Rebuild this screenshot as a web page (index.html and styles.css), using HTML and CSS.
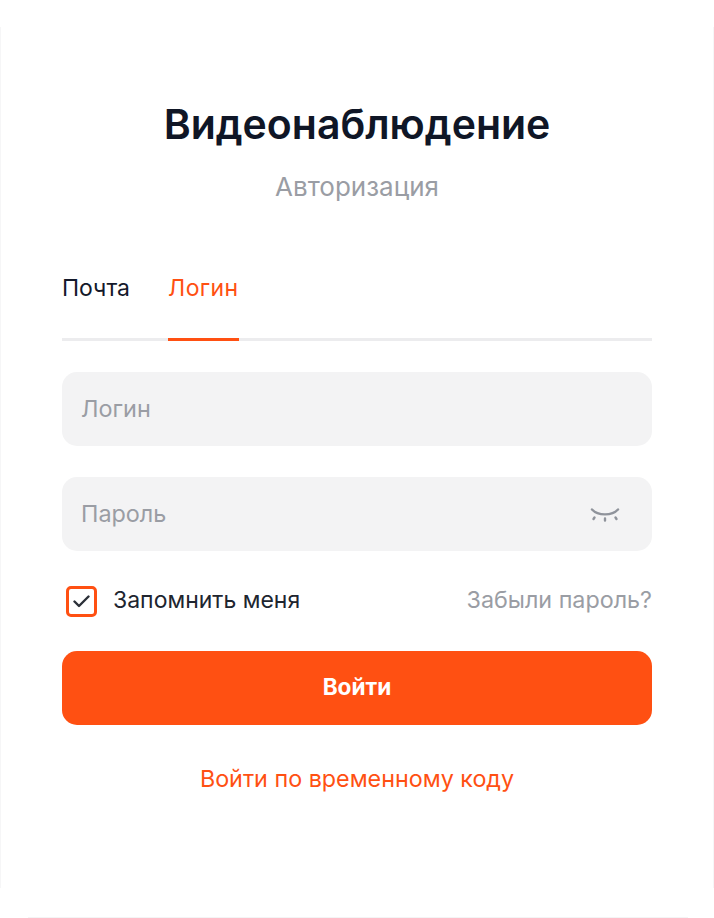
FILE: index.html
```html
<!DOCTYPE html>
<html lang="ru">
<head>
<meta charset="utf-8">
<title>Видеонаблюдение</title>
<link rel="stylesheet" href="styles.css">
</head>
<body>
<main class="card">
  <h1 class="title">Видеонаблюдение</h1>
  <p class="subtitle">Авторизация</p>
  <nav class="tabs">
    <a class="tab">Почта</a>
    <a class="tab tab-active">Логин</a>
  </nav>
  <form class="form">
    <div class="field"><span class="placeholder">Логин</span></div>
    <div class="field">
      <span class="placeholder">Пароль</span>
      <svg class="eye" width="30" height="18" viewBox="0 0 30 18" fill="none" stroke="#8f939b" stroke-linecap="round">
        <path d="M2 3.5C8 10 22 10 28 3.5" stroke-width="2.4"/>
        <path d="M4.5 11.5L3.5 13M15 12.5V14.5M25.5 11.5L26.5 13" stroke-width="2.4"/>
      </svg>
    </div>
    <div class="options">
      <label class="remember">
        <span class="checkbox">
          <svg width="17" height="13" viewBox="0 0 17 13" fill="none" stroke="#2b3038" stroke-width="2.4" stroke-linecap="round" stroke-linejoin="round"><path d="M1.5 6.5L6 11L15.5 1.5"/></svg>
        </span>
        <span class="remember-text">Запомнить меня</span>
      </label>
      <a class="forgot">Забыли пароль?</a>
    </div>
    <button class="submit" type="button">Войти</button>
    <a class="code-link">Войти по временному коду</a>
  </form>
</main>
</body>
</html>
```

FILE: styles.css
```css
* { box-sizing: border-box; }
html, body { margin: 0; height: 100%; background: #fff; }
body { font-family: Inter, "Noto Sans", sans-serif; overflow: hidden; }
.card {
  height: 918px;
  padding: 0 62px;
  background-color: #fff;
  background-image:
    linear-gradient(#f6f6f7, #f6f6f7),
    linear-gradient(#f6f6f7, #f6f6f7),
    linear-gradient(#f4f4f5, #f4f4f5);
  background-repeat: no-repeat;
  background-size: 1px 861px, 1px 861px, 660px 1px;
  background-position: 0 27px, 713px 27px, 28px 917px;
  display: flex;
  flex-direction: column;
}
.title {
  margin: 99px 0 0;
  height: 50px;
  font-size: 41px;
  line-height: 50px;
  font-weight: 600;
  color: #0f1626;
  text-align: center;
  white-space: nowrap;
}
.subtitle {
  margin: 23px 0 0;
  font-size: 26px;
  line-height: 30px;
  color: #9a9da4;
  text-align: center;
}
.tabs {
  margin-top: 68px;
  display: flex;
  gap: 38px;
  height: 71px;
  border-bottom: 3px solid #ececee;
}
.tab {
  height: 71px;
  padding-top: 3px;
  font-size: 23px;
  line-height: 30px;
  color: #14192a;
}
.tab-active { color: #ff5012; border-bottom: 3px solid #ff5012; letter-spacing: 0.4px; }
.form { display: flex; flex-direction: column; margin-top: 31px; }
.field {
  height: 74px;
  margin-bottom: 31px;
  padding: 0 32px 0 19px;
  background: #f3f3f4;
  border-radius: 15px;
  display: flex;
  align-items: center;
  justify-content: space-between;
}
.placeholder { font-size: 23.4px; color: #9a9da4; padding-bottom: 1px; }
.eye { display: block; margin-top: 2px; }
.options {
  margin-top: 3px;
  height: 32px;
  display: flex;
  align-items: center;
  justify-content: space-between;
}
.remember { display: flex; align-items: center; gap: 16px; padding-left: 4px; }
.checkbox {
  width: 31px;
  height: 31px;
  border: 3px solid #ff5012;
  border-radius: 5px;
  display: flex;
  align-items: center;
  justify-content: center;
}
.remember-text { font-size: 23px; color: #20252f; padding-bottom: 2px; }
.forgot { font-size: 23.3px; color: #9a9da4; padding-bottom: 3px; }
.submit {
  margin-top: 34px;
  height: 74px;
  padding: 0 0 3px;
  border: 0;
  border-radius: 15px;
  background: #ff5012;
  color: #fff;
  font: 700 22.6px Inter, "Noto Sans", sans-serif;
}
.code-link {
  margin-top: 37px;
  font-size: 23.3px;
  line-height: 34px;
  color: #ff5012;
  text-align: center;
}
```
